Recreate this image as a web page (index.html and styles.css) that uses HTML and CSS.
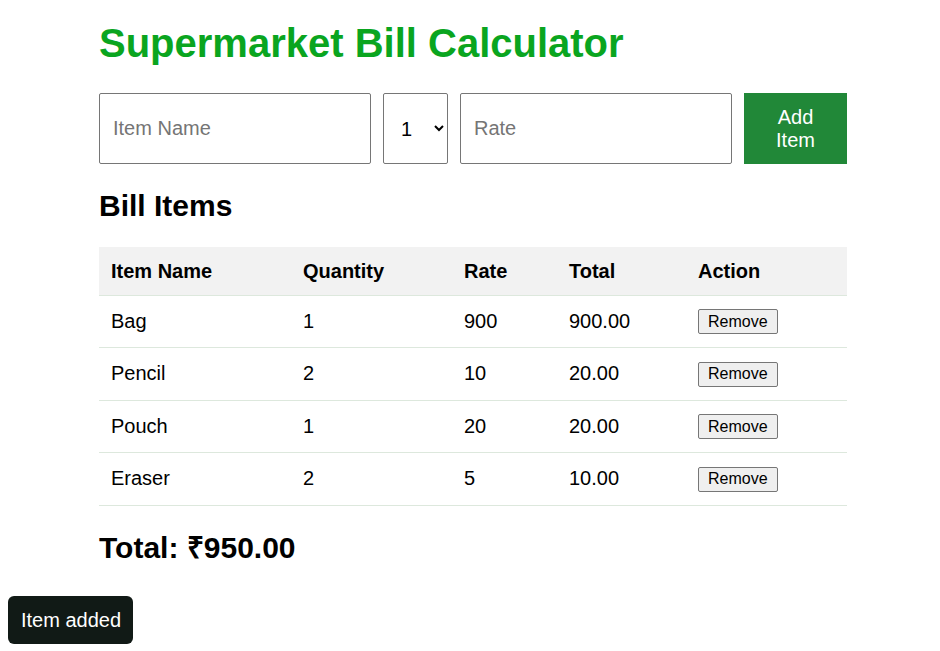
FILE: index.html
```html
<!DOCTYPE html>
<html>
<head>
<meta charset="utf-8">
<link rel="stylesheet" href="styles.css">
</head>
<body>
<div class="container">
  <h1 class="title">Supermarket Bill Calculator</h1>
  <div class="form-row">
    <input class="field" type="text" placeholder="Item Name">
    <select class="qty"><option>1</option><option>2</option><option>3</option></select>
    <input class="field" type="text" placeholder="Rate">
    <button class="add-btn">Add Item</button>
  </div>
  <h2 class="section">Bill Items</h2>
  <table class="bill">
    <colgroup>
      <col class="c1"><col class="c2"><col class="c3"><col class="c4"><col class="c5">
    </colgroup>
    <thead>
      <tr><th>Item Name</th><th>Quantity</th><th>Rate</th><th>Total</th><th>Action</th></tr>
    </thead>
    <tbody>
      <tr><td>Bag</td><td>1</td><td>900</td><td>900.00</td><td><button class="rm">Remove</button></td></tr>
      <tr><td>Pencil</td><td>2</td><td>10</td><td>20.00</td><td><button class="rm">Remove</button></td></tr>
      <tr><td>Pouch</td><td>1</td><td>20</td><td>20.00</td><td><button class="rm">Remove</button></td></tr>
      <tr><td>Eraser</td><td>2</td><td>5</td><td>10.00</td><td><button class="rm">Remove</button></td></tr>
    </tbody>
  </table>
  <h2 class="grand">Total: ₹950.00</h2>
</div>
<div class="toast">Item added</div>
</body>
</html>
```
FILE: styles.css
```css
* { box-sizing: border-box; }
body {
  margin: 0;
  font-family: "Liberation Sans", Arial, sans-serif;
  color: #000;
  background: #fff;
}
.container {
  width: 748px;
  margin-left: 99px;
  padding-top: 20px;
}
.title {
  margin: 0;
  font-size: 40px;
  line-height: 46px;
  color: #0aa51f;
  font-weight: bold;
}
.form-row {
  display: flex;
  gap: 12px;
  margin-top: 27px;
  height: 71px;
}
.field {
  width: 272px;
  height: 71px;
  padding: 0 13px;
  font-family: inherit;
  font-size: 20px;
  border: 1px solid #767676;
  border-radius: 2px;
  outline: none;
}
.field::placeholder { color: #757575; }
.qty {
  width: 65px;
  height: 71px;
  font-family: inherit;
  font-size: 20px;
  border: 1px solid #767676;
  border-radius: 2px;
  padding: 0 0 0 13px;
  background: #fff;
}
.add-btn {
  width: 103px;
  height: 71px;
  background: #218838;
  color: #fff;
  border: none;
  font-family: inherit;
  font-size: 20px;
  line-height: 23px;
  padding: 0 20px;
}
.section {
  margin: 25px 0 0;
  font-size: 30px;
  line-height: 34px;
}
.bill {
  margin-top: 24px;
  width: 748px;
  border-collapse: collapse;
  font-size: 20px;
}
.c1 { width: 192px; }
.c2 { width: 161px; }
.c3 { width: 105px; }
.c4 { width: 129px; }
.c5 { width: 161px; }
.bill th {
  background: #f2f2f2;
  text-align: left;
  font-weight: bold;
  padding: 1px 12px 0;
  height: 48px;
  border-bottom: 1px solid #dde8dd;
}
.bill td {
  padding: 0 12px;
  height: 52.5px;
  border-bottom: 1px solid #dde8dd;
}
.rm {
  font-family: inherit;
  font-size: 16px;
  height: 25px;
  padding: 0 9px;
  background: #efefef;
  border: 1px solid #767676;
  border-radius: 2px;
  color: #000;
}
.grand {
  margin: 25px 0 0;
  font-size: 30px;
  line-height: 34px;
}
.toast {
  position: fixed;
  left: 8px;
  top: 596px;
  height: 48px;
  padding: 0 12px 0 13px;
  display: flex;
  align-items: center;
  background: #111a16;
  color: #fff;
  font-size: 20px;
  border-radius: 6px;
}
```
